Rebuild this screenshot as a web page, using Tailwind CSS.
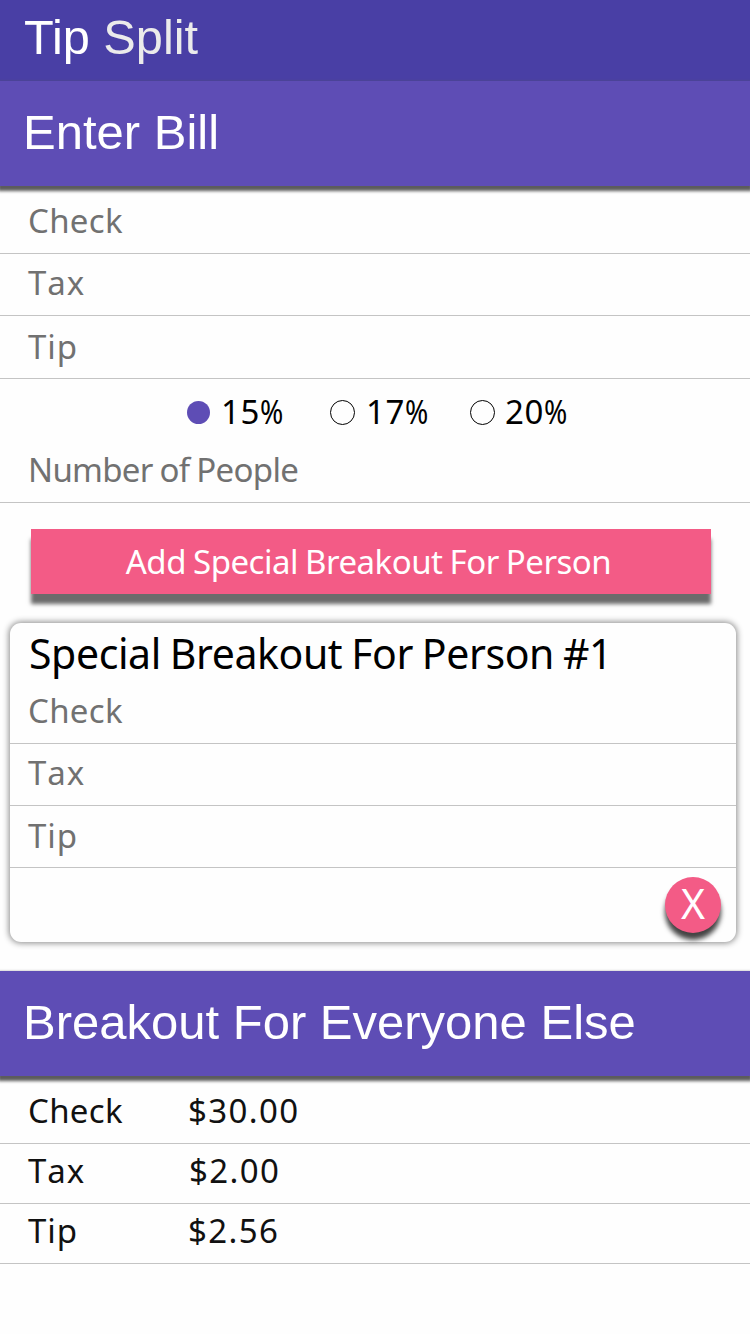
<!DOCTYPE html>
<html lang="en">
<head>
<meta charset="utf-8">
<title>Tip Split</title>
<script src="https://cdn.jsdelivr.net/npm/@tailwindcss/browser@4"></script>
</head>
<body class="bg-[#fefefe]">
<div class="w-[750px] h-[1334px] overflow-hidden flex flex-col font-['Noto_Sans',sans-serif] text-[33px] leading-10 text-[#111]">
  <header class="h-[81px] shrink-0 bg-[#493fa5] pl-6 pt-[9px] font-['Liberation_Sans',sans-serif] text-[48.7px] leading-14 text-white">Tip <span class="text-[#ebebeb]">Split</span></header>
  <h1 class="h-[105px] shrink-0 bg-[#5e4db5] pl-[23px] pt-[23px] font-['Liberation_Sans',sans-serif] text-[49px] leading-14 text-white shadow-[0_3px_3px_2px_#5c5c5c]">Enter Bill</h1>

  <form class="shrink-0 flex flex-col text-[#717171]">
    <label class="h-[68px] flex items-end pl-7 pb-3 border-b border-[#c4c4c4] tracking-[0.3px]">Check</label>
    <label class="h-[62px] flex items-end pl-7 pb-3 border-b border-[#c4c4c4] tracking-[1px] [font-kerning:none]">Tax</label>
    <label class="h-[63px] flex items-end pl-7 pb-[11px] border-b border-[#c4c4c4] tracking-[1px]">Tip</label>
    <div class="h-[62px] flex items-center pt-1 pl-[187px] text-black">
      <div class="w-[143px] flex items-center gap-[11px]"><i class="size-[23px] rounded-full bg-[#5e4db5]"></i><span class="tracking-[0.6px]">15<span class="inline-block origin-left scale-x-85">%</span></span></div>
      <div class="w-[140px] flex items-center gap-[11px]"><i class="size-[25px] rounded-full border border-black"></i><span class="tracking-[0.6px]">17<span class="inline-block origin-left scale-x-85">%</span></span></div>
      <div class="flex items-center gap-[10px]"><i class="size-[25px] rounded-full border border-black"></i><span class="tracking-[0.6px]">20<span class="inline-block origin-left scale-x-85">%</span></span></div>
    </div>
    <label class="h-[62px] flex items-end pl-7 pb-3 border-b border-[#c4c4c4] tracking-[-0.7px] [word-spacing:-1px]">Number of People</label>
  </form>

  <button class="mt-[26px] ml-[31px] w-[680px] h-[65px] shrink-0 bg-[#f35b86] pr-[5px] text-white tracking-[-0.5px] [word-spacing:-1px] shadow-[0_10px_4px_#6b6b6b]">Add Special Breakout For Person</button>

  <section class="mt-[29px] ml-[10px] w-[726px] h-[319px] shrink-0 rounded-[11px] bg-[#fefefe] shadow-[0_0_6px_1px_#888] flex flex-col text-[#717171]">
    <h2 class="h-[58px] pl-[19px] pt-[3px] text-[41px] leading-[54px] tracking-[-0.4px] [word-spacing:-1.4px] text-black">Special Breakout For Person #1</h2>
    <label class="h-[63px] flex items-end pl-[18px] pb-3 border-b border-[#c4c4c4] tracking-[0.3px]">Check</label>
    <label class="h-[62px] flex items-end pl-[18px] pb-3 border-b border-[#c4c4c4] tracking-[1px] [font-kerning:none]">Tax</label>
    <label class="h-[62px] flex items-end pl-[18px] pb-[11px] border-b border-[#c4c4c4] tracking-[1px]">Tip</label>
    <button class="mt-[9px] mr-[15px] self-end size-14 rounded-full bg-[#f35b86] pb-[3px] text-white text-[41px] leading-[53px] shadow-[0_7px_5px_#444]">X</button>
  </section>

  <h2 class="mt-[29px] h-[105px] shrink-0 bg-[#5e4db5] pl-[23px] pt-[23px] font-['Liberation_Sans',sans-serif] text-[49px] leading-14 text-white shadow-[0_3px_3px_2px_#5c5c5c]">Breakout For Everyone Else</h2>
  <dl class="shrink-0">
    <div class="h-[68px] flex items-end pl-7 pb-3 border-b border-[#c4c4c4]"><dt class="w-[160px] tracking-[0.3px]">Check</dt><dd class="tracking-[1.4px]">$30.00</dd></div>
    <div class="h-[60px] flex items-end pl-7 pb-3 border-b border-[#c4c4c4]"><dt class="w-[161px] tracking-[1px] [font-kerning:none]">Tax</dt><dd class="tracking-[1.4px]">$2.00</dd></div>
    <div class="h-[60px] flex items-end pl-7 pb-3 border-b border-[#c4c4c4]"><dt class="w-[160px] tracking-[1px]">Tip</dt><dd class="tracking-[1.4px]">$2.56</dd></div>
  </dl>
</div>
</body>
</html>
